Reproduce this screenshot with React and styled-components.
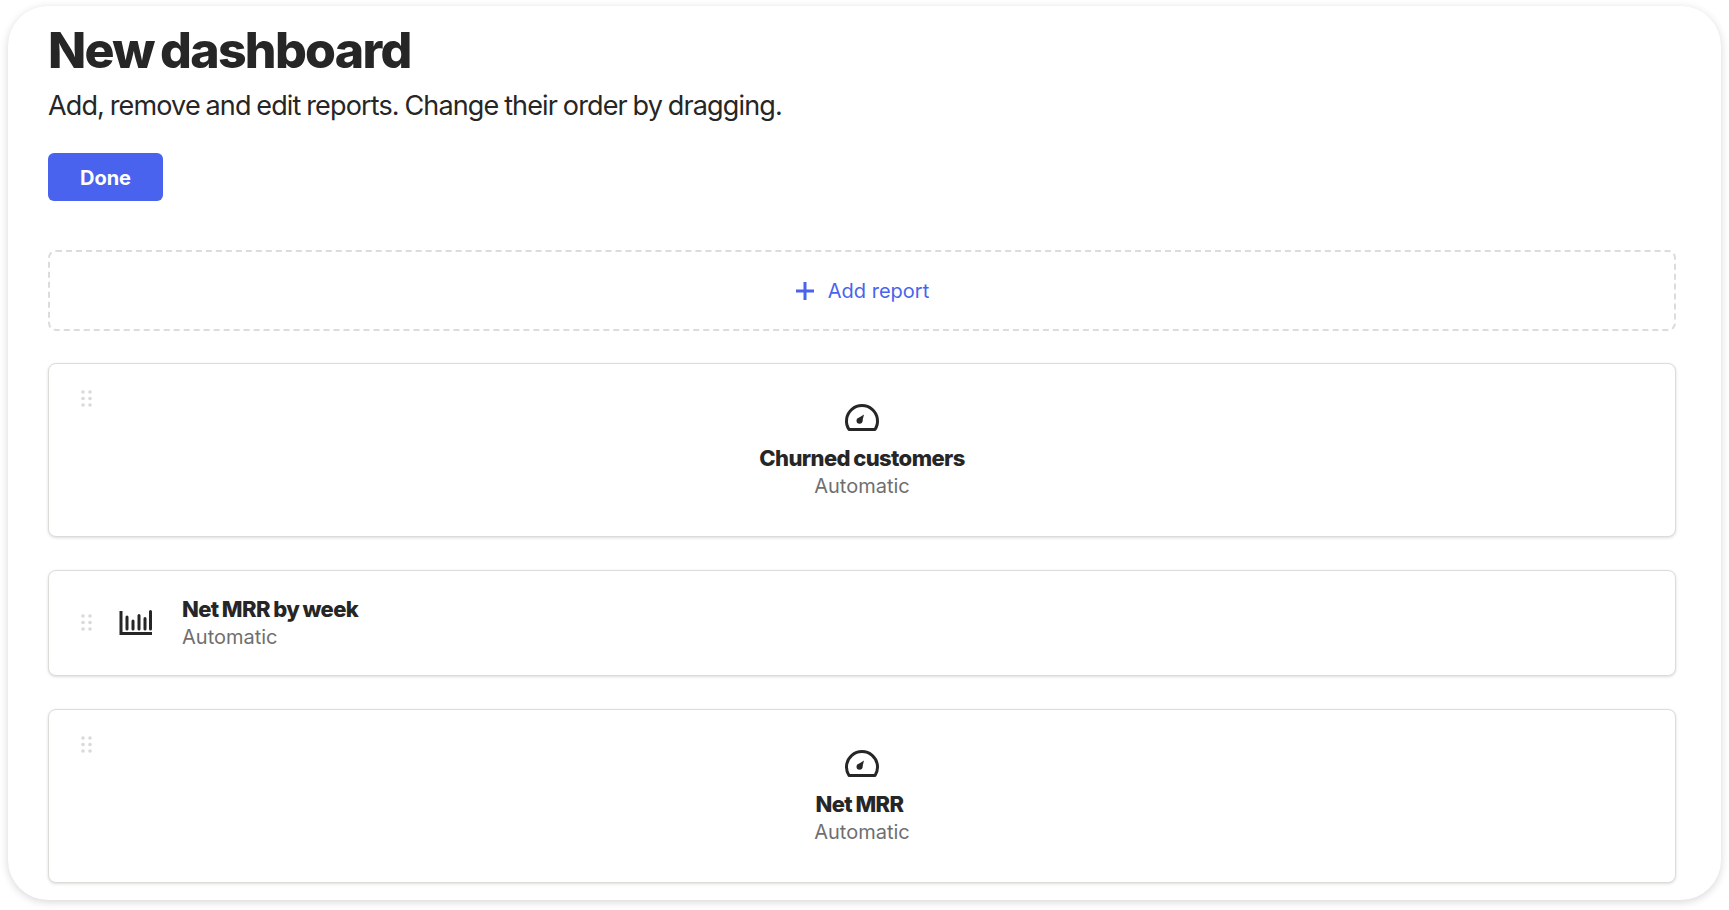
import React from "react";
import styled, { createGlobalStyle } from "styled-components";

const Global = createGlobalStyle`
  html, body { margin: 0; background: #fff; }
  body {
    box-sizing: border-box;
    height: 100vh;
    padding-top: 6px;
    overflow: hidden;
    font-family: Inter, "Liberation Sans", Arial, sans-serif;
    color: #262626;
  }
`;

const Shell = styled.main`
  box-sizing: border-box;
  width: 1713px;
  height: 894px;
  margin: 0 8px;
  padding: 19px 45px 0 40px;
  background: #fff;
  border-radius: 40px;
  box-shadow: 0 2px 8px rgba(0, 0, 0, 0.16);
  overflow: hidden;
`;
const Title = styled.h1`
  margin: 0;
  font-size: 50px;
  line-height: 50px;
  font-weight: 800;
  letter-spacing: -1.7px;
  word-spacing: -3px;
  color: #262626;
`;
const Subtitle = styled.p`
  margin: 14px 0 0;
  font-size: 27px;
  line-height: 34px;
  letter-spacing: -0.86px;
  word-spacing: -1px;
  color: #262626;
`;
const DoneButton = styled.button`
  display: block;
  width: 115px;
  height: 48px;
  margin: 30px 0 0;
  padding: 2px 0 0;
  border: 0;
  border-radius: 6px;
  background: #4a63ee;
  color: #fff;
  font: 700 20px Inter, "Liberation Sans", Arial, sans-serif;
`;
const AddBox = styled.div`
  box-sizing: border-box;
  height: 81px;
  margin-top: 49px;
  border: 2px dashed #dcdcda;
  border-radius: 8px;
  display: flex;
  align-items: center;
  justify-content: center;
  gap: 13px;
  color: #4a63ee;
  font-size: 20px;
`;
const List = styled.div`
  display: flex;
  flex-direction: column;
  gap: 33px;
  margin-top: 32px;
`;
const Card = styled.section`
  box-sizing: border-box;
  height: ${(p) => p.$h}px;
  border: 1px solid #dedcd9;
  border-radius: 8px;
  background: #fff;
  box-shadow: 0 1px 3px rgba(0, 0, 0, 0.14);
  display: grid;
  grid-template-columns: ${(p) => (p.$row ? "auto auto 1fr" : "1fr auto 1fr")};
  align-items: ${(p) => (p.$row ? "center" : "start")};
`;
const Handle = styled.svg`
  display: block;
  width: 11px;
  height: 17px;
  margin: ${(p) => (p.$row ? "0 0 2px" : "26px 0 0")} 32px;
  margin-right: 0;
  fill: #dcdad7;
`;
const Center = styled.div`
  display: flex;
  flex-direction: column;
  align-items: center;
  padding-top: 40px;
`;
const GaugeIcon = styled.svg`
  display: block;
  width: 36px;
  height: 27px;
  margin-bottom: 13px;
`;
const ChartIcon = styled.svg`
  display: block;
  width: 33px;
  height: 25px;
  margin: 0 0 2px 27px;
`;
const TextBlock = styled.div`
  margin-left: 30px;
`;
const Name = styled.div`
  font-size: 22px;
  line-height: 29px;
  font-weight: 800;
  letter-spacing: -0.6px;
  word-spacing: -1px;
  color: #262626;
  margin-right: ${(p) => p.$trail || 0}px;
`;
const Sub = styled.div`
  font-size: 20px;
  line-height: 27px;
  color: #6f6f6f;
`;

const Dots = ({ $row }) => (
  <Handle $row={$row} viewBox="0 0 11 17">
    {[2, 8.5, 15].flatMap((y) =>
      [2, 9].map((x) => <circle key={`${x}-${y}`} cx={x} cy={y} r="1.8" />)
    )}
  </Handle>
);
const Gauge = () => (
  <GaugeIcon viewBox="0 0 36 27" fill="none" stroke="#262626" strokeWidth="3">
    <path d="M5 25.5 A 15.5 15.5 0 1 1 31 25.5 Z" strokeLinejoin="round" />
    <circle cx="15.5" cy="16.7" r="3" fill="#262626" stroke="none" />
    <path d="M13.6 14.6 L20 10.5 L18 18.2 Z" fill="#262626" stroke="none" />
  </GaugeIcon>
);
const Chart = () => (
  <ChartIcon viewBox="0 0 33 25" fill="none" stroke="#262626" strokeWidth="3">
    <path d="M2 1 V23.5 H33" />
    <path d="M8 7 V19 M14 11 V19 M20 5.5 V19 M26 8.5 V19 M31.5 1.5 V19" strokeLinecap="round" />
  </ChartIcon>
);
const Plus = () => (
  <svg width="20" height="20" viewBox="0 0 20 20" stroke="#4a63ee" strokeWidth="3" fill="none" aria-hidden>
    <path d="M10 1 V19 M1 10 H19" />
  </svg>
);

const CenterCard = ({ name, trail }) => (
  <Card $h={174}>
    <Dots />
    <Center>
      <Gauge />
      <Name $trail={trail}>{name}</Name>
      <Sub>Automatic</Sub>
    </Center>
  </Card>
);

export default function App() {
  return (
    <>
      <Global />
      <Shell>
        <Title>New dashboard</Title>
        <Subtitle>Add, remove and edit reports. Change their order by dragging.</Subtitle>
        <DoneButton>Done</DoneButton>
        <AddBox>
          <Plus />
          <span>Add report</span>
        </AddBox>
        <List>
          <CenterCard name="Churned customers" />
          <Card $h={106} $row>
            <Dots $row />
            <Chart />
            <TextBlock>
              <Name>Net MRR by week</Name>
              <Sub>Automatic</Sub>
            </TextBlock>
          </Card>
          <CenterCard name="Net MRR" trail={5} />
        </List>
      </Shell>
    </>
  );
}
